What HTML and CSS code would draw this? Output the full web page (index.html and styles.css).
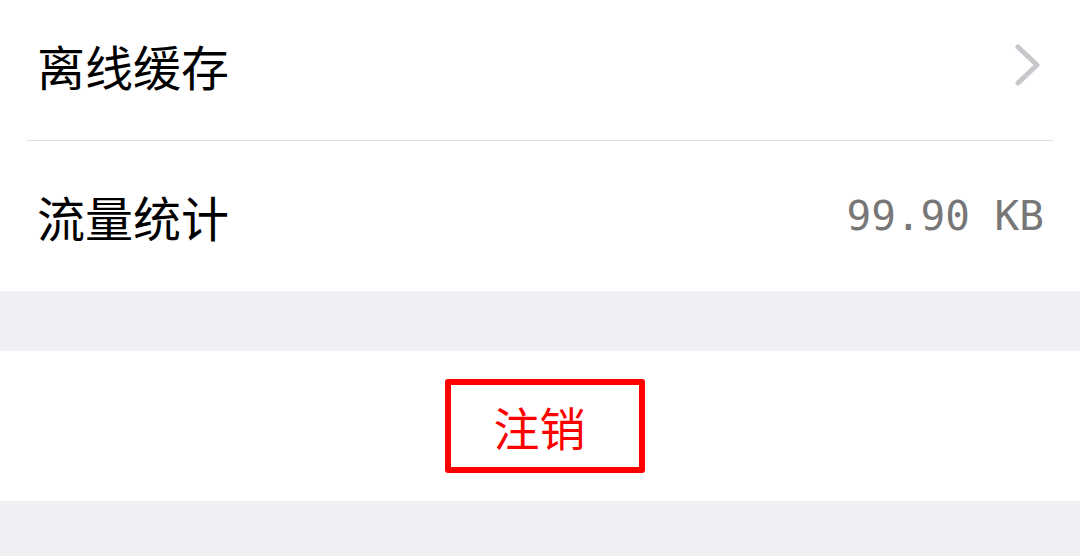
FILE: index.html
```html
<!DOCTYPE html>
<html lang="zh-CN">
<head>
  <meta charset="UTF-8">
  <title>设置</title>
  <meta name="viewport" content="width=device-width, initial-scale=1.0">
  <link rel="stylesheet" href="styles.css">
</head>
<body>
  <div class="group">
    <div class="cell">
      <span class="cell-title">离线缓存</span>
      <svg class="arrow" width="30" height="44" viewBox="0 0 30 44">
        <polyline points="4,4 23,22 4,40" fill="none" stroke="#c7c7cc" stroke-width="5" stroke-linecap="round" stroke-linejoin="round"/>
      </svg>
    </div>
    <div class="line"></div>
    <div class="cell">
      <span class="cell-title">流量统计</span>
      <span class="cell-value">99.90 KB</span>
    </div>
  </div>

  <div class="group logout-group">
    <div class="logout-cell">
      <button class="logout">注销</button>
    </div>
  </div>
</body>
</html>
```

FILE: styles.css
```css
body {
  margin: 0;
  background: #efeff4;
  font-family: "Noto Sans CJK SC", "Noto Sans", sans-serif;
  overflow: hidden;
}

.group {
  background: #fff;
  margin-top: -10px;
}

.logout-group {
  margin-top: 60px;
}

.cell {
  height: 150px;
  display: flex;
  align-items: center;
  justify-content: space-between;
  padding: 0 36px 0 37px;
  box-sizing: border-box;
}

.line {
  height: 1px;
  margin: 0 27px;
  background: #e0e0e0;
}

.cell-title {
  font-size: 48px;
  line-height: 1;
  color: #000;
}

.cell-value {
  font-family: "DejaVu Sans Mono", monospace;
  font-size: 41px;
  color: #777;
  line-height: 1;
}

.logout-cell {
  height: 150px;
  display: flex;
  align-items: center;
  justify-content: center;
}

.logout {
  font-family: "Noto Sans CJK SC", sans-serif;
  font-size: 46px;
  line-height: 1;
  color: #ff0000;
  background: #fff;
  border: 6px solid #ff0000;
  border-radius: 3px;
  width: 200px;
  height: 94px;
  padding: 0 11px 0 0;
  margin-left: 10px;
  box-sizing: border-box;
}
```
